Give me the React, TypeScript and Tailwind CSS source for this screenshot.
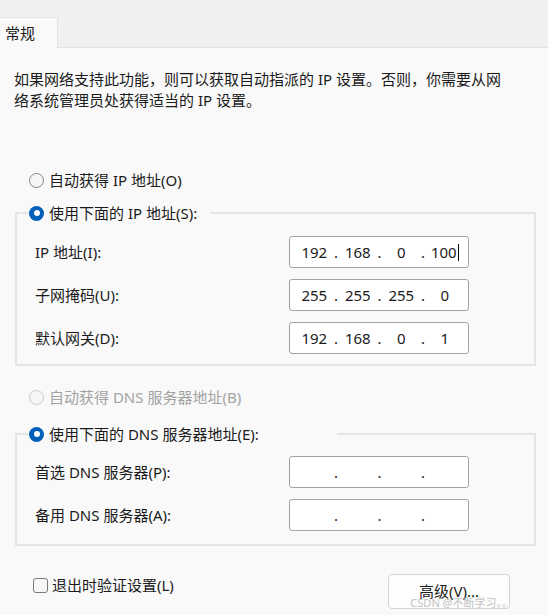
import React from "react";

const font = { fontFamily: '"Noto Sans", "Noto Sans CJK SC", sans-serif' };

const Radio: React.FC<{ checked?: boolean; disabled?: boolean }> = ({ checked, disabled }) => {
  if (checked) {
    return (
      <span className="flex h-[15px] w-[15px] shrink-0 items-center justify-center rounded-full bg-[#005fb8]">
        <span className="h-[6px] w-[6px] rounded-full bg-white" />
      </span>
    );
  }
  return (
    <span
      className={`h-[15px] w-[15px] shrink-0 rounded-full border bg-[#f6f6f6] ${
        disabled ? "border-[#c9c9c9]" : "border-[#858585]"
      }`}
    />
  );
};

const IpField: React.FC<{ values?: string[]; cursor?: boolean }> = ({ values = ["", "", "", ""], cursor }) => (
  <div className="flex h-8 w-[180px] items-center rounded-[3px] border border-[#a3a3a3] bg-white pl-[4px] text-[15px] leading-5 text-[#1b1b1b]">
    {values.map((v, i) => (
      <React.Fragment key={i}>
        <span className="flex w-[40.5px] items-center justify-center">
          {v}
          {cursor && i === 3 && <span className="ml-px inline-block h-[17px] w-px bg-black" />}
        </span>
        {i < 3 && <span className="flex w-[3px] justify-center">.</span>}
      </React.Fragment>
    ))}
  </div>
);

const Row: React.FC<{ label: string; children: React.ReactNode }> = ({ label, children }) => (
  <div className="flex items-center pl-[18px]">
    <span className="w-[254px]">{label}</span>
    {children}
  </div>
);

export default function App() {
  return (
    <div className="relative h-[615px] w-[548px] overflow-hidden bg-[#f9f9f9] text-[15px] text-[#1b1b1b]" style={font}>
      {/* tab strip */}
      <div className="flex h-[48px] items-end bg-[#f0f0f0]">
        <div className="flex h-[31px] w-[58px] items-center border-t border-r border-[#e3e3e3] bg-[#f9f9f9] pl-[5px] leading-5">
          常规
        </div>
        <div className="h-full flex-1 border-b border-[#e3e3e3]" />
      </div>

      <p className="pl-[14px] pr-[44px] pt-[21px] leading-[21px]">
        如果网络支持此功能，则可以获取自动指派的 IP 设置。否则，你需要从网络系统管理员处获得适当的 IP 设置。
      </p>

      <div className="mt-[59px] ml-[29px] flex h-5 items-center gap-[5px] leading-5">
        <Radio />
        <span>自动获得 IP 地址(O)</span>
      </div>

      <fieldset className="mt-[13px] ml-[15px] w-[521px] border-2 border-[#e5e5e5] pb-[10px]">
        <legend className="ml-[11px] w-[182px] pl-px">
          <span className="flex h-5 items-center gap-[5px] leading-5">
            <Radio checked />
            <span>使用下面的 IP 地址(S):</span>
          </span>
        </legend>
        <div className="mt-[13px] flex flex-col gap-[11px]">
          <Row label="IP 地址(I):">
            <IpField values={["192", "168", "0", "100"]} cursor />
          </Row>
          <Row label="子网掩码(U):">
            <IpField values={["255", "255", "255", "0"]} />
          </Row>
          <Row label="默认网关(D):">
            <IpField values={["192", "168", "0", "1"]} />
          </Row>
        </div>
      </fieldset>

      <div className="mt-[21px] ml-[29px] flex h-5 items-center gap-[5px] leading-5 text-[#a3a3a3]">
        <Radio disabled />
        <span>自动获得 DNS 服务器地址(B)</span>
      </div>

      <fieldset className="mt-[17px] ml-[15px] w-[521px] border-2 border-[#e5e5e5] pb-[13px]">
        <legend className="ml-[11px] w-[309px] pl-px">
          <span className="flex h-5 items-center gap-[5px] leading-5">
            <Radio checked />
            <span>使用下面的 DNS 服务器地址(E):</span>
          </span>
        </legend>
        <div className="mt-[12px] flex flex-col gap-[11px]">
          <Row label="首选 DNS 服务器(P):">
            <IpField />
          </Row>
          <Row label="备用 DNS 服务器(A):">
            <IpField />
          </Row>
        </div>
      </fieldset>

      <div className="mt-[28px] flex items-start justify-between pl-[33px] pr-[38px]">
        <label className="mt-px flex h-5 items-center gap-[4px] leading-5">
          <span className="h-[15px] w-[15px] rounded-[3px] border border-[#7a7a7a] bg-[#f7f7f7]" />
          <span>退出时验证设置(L)</span>
        </label>
        <div className="relative">
          <button className="flex h-[35px] w-[122px] items-center justify-center rounded-[4px] border border-[#d3d3d3] bg-[#fdfdfd] pb-[2px] leading-5">
            高级(V)...
          </button>
          <span className="absolute -right-[3px] bottom-0 whitespace-nowrap text-[11px] leading-3 text-[#c2c2c2]">
            CSDN @不断学习。。
          </span>
        </div>
      </div>
    </div>
  );
}
